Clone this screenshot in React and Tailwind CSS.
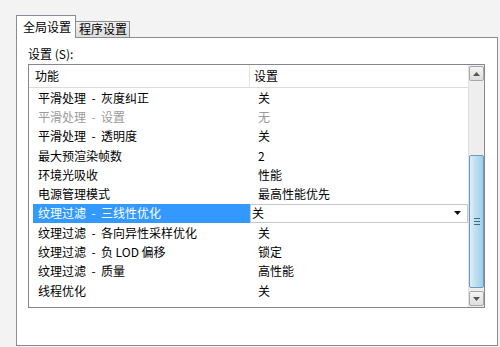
import React from "react";

const rows = [
  ["平滑处理  -  灰度纠正", "关"],
  ["平滑处理  -  设置", "无", true],
  ["平滑处理  -  透明度", "关"],
  ["最大预渲染帧数", "2"],
  ["环境光吸收", "性能"],
  ["电源管理模式", "最高性能优先"],
  ["纹理过滤  -  三线性优化", "关", false, true],
  ["纹理过滤  -  各向异性采样优化", "关"],
  ["纹理过滤  -  负 LOD 偏移", "锁定"],
  ["纹理过滤  -  质量", "高性能"],
  ["线程优化", "关"],
];

export default function App() {
  return (
    <div
      className="w-[500px] h-[347px] bg-[#f3f3f3] overflow-hidden text-[12px] text-black leading-none"
      style={{ fontFamily: '"Noto Sans CJK SC", "Noto Sans", sans-serif' }}
    >
      <div className="flex items-end pl-[16px] pt-[15px]">
        <div className="relative z-10 -mb-px w-[60px] h-[23px] bg-white border border-b-0 border-[#898c95] pl-[6px] pt-[5px]">
          全局设置
        </div>
        <div className="w-[54px] h-[16px] bg-gradient-to-b from-[#f2f2f2] to-[#dcdcdc] border border-l-0 border-b-0 border-[#898c95] pl-[3px] pt-[1px]">
          程序设置
        </div>
      </div>
      <div className="ml-[16px] w-[482px] h-[309px] bg-white border border-[#898c95] pl-[11px] pt-[8px]">
        <div className="h-[15px] flex items-center whitespace-pre">设置 (S):</div>
        <div className="mt-[3px] w-[457px] h-[244px] border border-[#828790] flex">
          <div className="flex-1 flex flex-col">
            <div className="h-[23px] flex border-b border-[#dcdcdc] bg-white">
              <div className="w-[221px] pl-[6px] flex items-center border-r border-[#e5e5e5]">功能</div>
              <div className="flex-1 pl-[4px] flex items-center">设置</div>
            </div>
            {rows.map(([a, b, grey, sel], i) => (
              <div key={i} className="h-[19.3px] flex items-center">
                <div className="w-[221px] h-full pl-[4px]">
                  <div
                    className={
                      "h-full flex items-center pl-[5px] whitespace-pre " +
                      (sel ? "bg-[#3399ff] text-white" : grey ? "text-[#9a9a9a]" : "")
                    }
                  >
                    {a}
                  </div>
                </div>
                {sel ? (
                  <div className="flex-1 h-full border border-[#c8c8c8] flex items-center justify-between pl-[1px] pr-[6px] bg-white">
                    <span>{b}</span>
                    <svg width="7" height="4" viewBox="0 0 7 4">
                      <path d="M0 0 L7 0 L3.5 4 Z" fill="#111" />
                    </svg>
                  </div>
                ) : (
                  <div className={"flex-1 pl-[8px] " + (grey ? "text-[#9a9a9a]" : "")}>{b}</div>
                )}
              </div>
            ))}
          </div>
          <div className="w-[16px] bg-[#eeeeee] border-l border-[#e0e0e0] flex flex-col items-center pt-[1px] pb-[1px]">
            <div className="w-[15px] h-[15px] border border-[#a8a8a8] rounded-[2px] bg-gradient-to-b from-[#f4f4f4] to-[#dedede] flex items-center justify-center">
              <svg width="7" height="4" viewBox="0 0 7 4">
                <path d="M0 4 L3.5 0 L7 4 Z" fill="#555" />
              </svg>
            </div>
            <div className="h-[74px]" />
            <div className="w-[15px] h-[133px] border border-[#6b9cc0] rounded-[2px] bg-gradient-to-r from-[#dceef9] via-[#bcdcf0] to-[#a2cde9] flex items-center justify-center">
              <div className="flex flex-col gap-[2px]">
                <div className="w-[6px] h-px bg-[#3d6c93]" />
                <div className="w-[6px] h-px bg-[#3d6c93]" />
                <div className="w-[6px] h-px bg-[#3d6c93]" />
              </div>
            </div>
            <div className="w-[15px] h-[15px] mt-auto border border-[#a8a8a8] rounded-[2px] bg-gradient-to-b from-[#f4f4f4] to-[#dedede] flex items-center justify-center">
              <svg width="7" height="4" viewBox="0 0 7 4">
                <path d="M0 0 L7 0 L3.5 4 Z" fill="#555" />
              </svg>
            </div>
          </div>
        </div>
      </div>
    </div>
  );
}
